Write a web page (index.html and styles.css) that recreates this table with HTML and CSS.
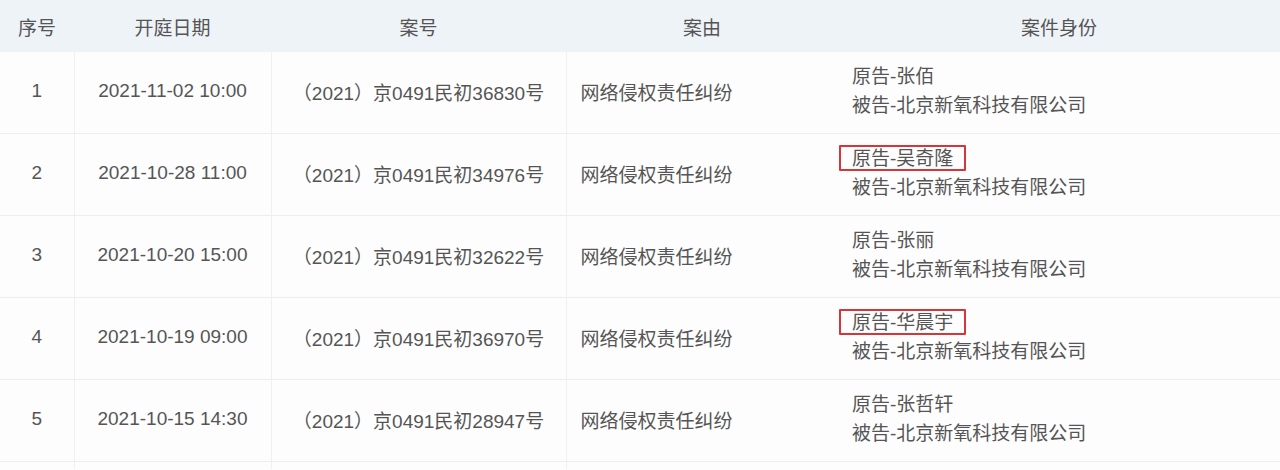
FILE: index.html
```html
<!DOCTYPE html>
<html lang="zh">
<head>
<meta charset="utf-8">
<title>开庭公告</title>
<link rel="stylesheet" href="styles.css">
</head>
<body>
<table class="cases">
  <colgroup>
    <col class="c-no"><col class="c-date"><col class="c-num"><col class="c-cause"><col class="c-party">
  </colgroup>
  <thead>
    <tr>
      <th>序号</th><th>开庭日期</th><th>案号</th><th>案由</th><th>案件身份</th>
    </tr>
  </thead>
  <tbody>
    <tr>
      <td class="center">1</td>
      <td class="center">2021-11-02 10:00</td>
      <td class="center">（2021）京0491民初36830号</td>
      <td class="left">网络侵权责任纠纷</td>
      <td class="party"><div>原告-张佰</div><div>被告-北京新氧科技有限公司</div></td>
    </tr>
    <tr>
      <td class="center">2</td>
      <td class="center">2021-10-28 11:00</td>
      <td class="center">（2021）京0491民初34976号</td>
      <td class="left">网络侵权责任纠纷</td>
      <td class="party"><div><span class="mark">原告-吴奇隆</span></div><div>被告-北京新氧科技有限公司</div></td>
    </tr>
    <tr>
      <td class="center">3</td>
      <td class="center">2021-10-20 15:00</td>
      <td class="center">（2021）京0491民初32622号</td>
      <td class="left">网络侵权责任纠纷</td>
      <td class="party"><div>原告-张丽</div><div>被告-北京新氧科技有限公司</div></td>
    </tr>
    <tr>
      <td class="center">4</td>
      <td class="center">2021-10-19 09:00</td>
      <td class="center">（2021）京0491民初36970号</td>
      <td class="left">网络侵权责任纠纷</td>
      <td class="party"><div><span class="mark">原告-华晨宇</span></div><div>被告-北京新氧科技有限公司</div></td>
    </tr>
    <tr>
      <td class="center">5</td>
      <td class="center">2021-10-15 14:30</td>
      <td class="center">（2021）京0491民初28947号</td>
      <td class="left">网络侵权责任纠纷</td>
      <td class="party"><div>原告-张哲轩</div><div>被告-北京新氧科技有限公司</div></td>
    </tr>
    <tr class="partial">
      <td></td><td></td><td></td><td></td><td></td>
    </tr>
  </tbody>
</table>
</body>
</html>
```
FILE: styles.css
```css
html, body {
  margin: 0;
  padding: 0;
  background: #fdfdfd;
}
body {
  font-family: "Liberation Sans", "Noto Sans CJK SC", sans-serif;
  color: #555;
  font-size: 19px;
  height: 470px;
  overflow: hidden;
}
.cases {
  width: 1280px;
  border-collapse: collapse;
  table-layout: fixed;
}
.c-no { width: 74px; }
.c-date { width: 197px; }
.c-num { width: 295px; }
.c-cause { width: 272px; }
.c-party { width: 442px; }

.cases thead th {
  height: 52px;
  padding: 0;
  background: #eef3f8;
  font-weight: normal;
  color: #555;
  text-align: center;
  vertical-align: middle;
  border: none;
}
.cases tbody td {
  height: 78px;
  padding: 0 0 3px 0;
  border-bottom: 1px solid #ebedf0;
  border-left: 1px solid #eef0f3;
  vertical-align: middle;
  background: #fdfdfd;
}
.cases tbody td:first-child { border-left: none; }
.cases tbody td:last-child { border-left: none; }
.center { text-align: center; }
.left { padding-left: 14px !important; }
.party {
  padding-left: 14px !important;
  line-height: 29px;
}
.party div { white-space: nowrap; }
.mark {
  position: relative;
}
.mark::after {
  content: "";
  position: absolute;
  left: -13px;
  right: -13px;
  top: -3px;
  bottom: -2px;
  border: 2px solid #d6353a;
  border-radius: 1px;
}
.cases tbody tr.partial td {
  height: 7px;
  padding: 0;
  border-bottom: none;
}
```
